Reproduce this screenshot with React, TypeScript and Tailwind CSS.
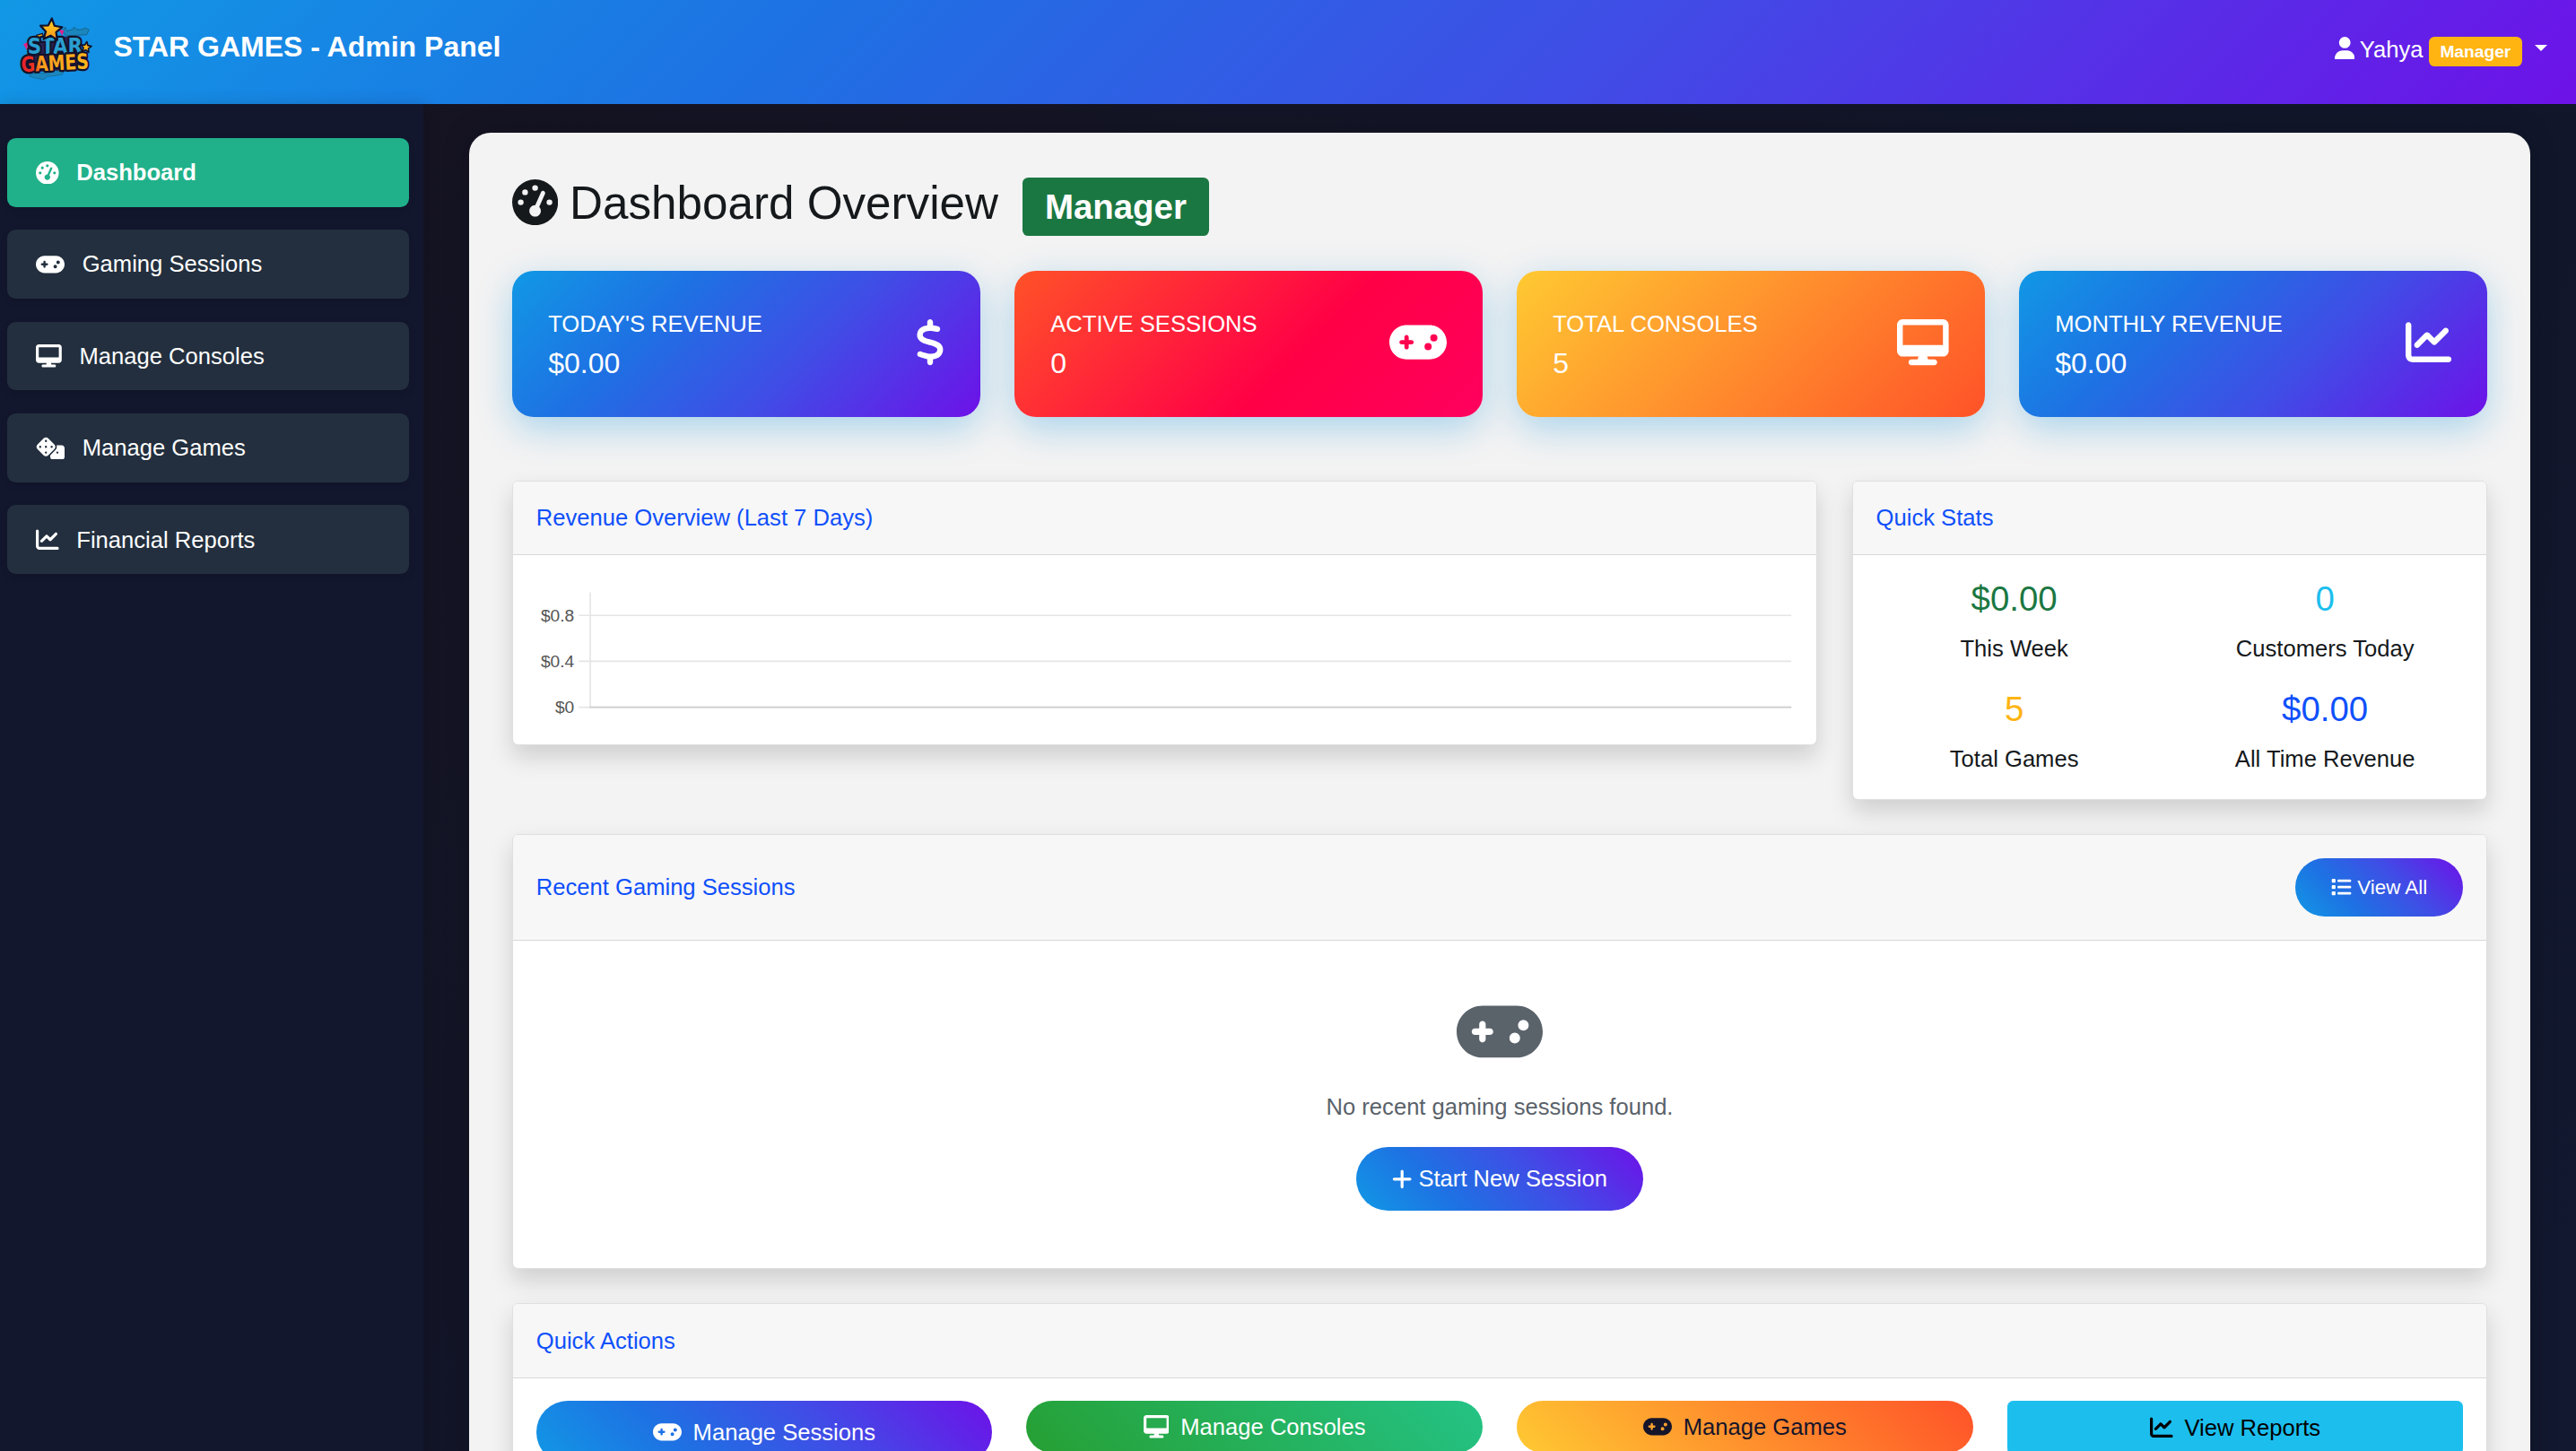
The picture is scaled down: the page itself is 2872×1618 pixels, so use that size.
import type { ReactNode } from "react";
import {
  FaChartLine,
  FaDesktop,
  FaDice,
  FaDollarSign,
  FaGamepad,
  FaGaugeHigh,
  FaList,
  FaPlus,
  FaUser,
} from "react-icons/fa6";

const STAR =
  "M0,-38 L11,-13 L38,-10 L18,9 L24,36 L0,22 L-24,36 L-18,9 L-38,-10 L-11,-13 Z";

function Logo() {
  return (
    <svg viewBox="0 0 330 270" className="mb-[3.75px] h-[56.25px] w-[68.75px] shrink-0">
      <defs>
        <linearGradient id="gold" x1="0" y1="0" x2="0" y2="1">
          <stop offset="0" stopColor="#ffd91f" />
          <stop offset="1" stopColor="#f7921c" />
        </linearGradient>
        <linearGradient id="fire" x1="0" y1="0" x2="1" y2="0">
          <stop offset="0" stopColor="#e8202c" />
          <stop offset="0.17" stopColor="#ee3020" />
          <stop offset="0.3" stopColor="#fb9f1c" />
          <stop offset="1" stopColor="#fdb71d" />
        </linearGradient>
      </defs>
      <path
        d="M184,66 l4,-6 6,14 20,-6 4,-8 6,8 14,2 18,-6 12,6 -8,16 -70,4 -8,-12z"
        fill="#1a86bd"
        stroke="#16648f"
        strokeWidth="3"
      />
      <path
        d="M72,218 l26,-4 30,2 30,-10 26,2 -6,12 -28,4 -22,2 -12,10 -22,-4 -24,-6z"
        fill="#1a86bd"
        stroke="#16648f"
        strokeWidth="2"
      />
      <path d="M48,118 l16,-8 -4,28z M166,68 l18,4 -6,18z" fill="#e0218a" />
      <path
        d="M62,104 L90,94 L130,96 L190,92 L226,92 L238,146 L262,152 L262,190 L240,200 L70,212 L44,196 L48,168 L64,154 Z"
        fill="#2b2150"
      />
      <path d="M92,88 l20,-6 4,14 -20,6z" fill="#f7b21c" stroke="#141430" strokeWidth="4" />
      <g
        fontFamily="DejaVu Sans, sans-serif"
        fontWeight="bold"
        paintOrder="stroke"
        stroke="#12122c"
        strokeLinejoin="round"
      >
        <text
          x="62"
          y="151"
          fontSize="72"
          textLength="184"
          lengthAdjust="spacingAndGlyphs"
          fill="#2a9fd0"
          strokeWidth="14"
        >
          STAR
        </text>
        <text
          x="42"
          y="211"
          fontSize="70"
          textLength="226"
          lengthAdjust="spacingAndGlyphs"
          fill="url(#fire)"
          strokeWidth="14"
          transform="rotate(-3 42 211)"
        >
          GAMES
        </text>
      </g>
      <path
        d={STAR}
        transform="translate(141 68) rotate(4) scale(0.96)"
        fill="url(#gold)"
        stroke="#12122c"
        strokeWidth="7"
        strokeLinejoin="round"
      />
      <path
        d={STAR}
        transform="translate(258 127) rotate(8) scale(0.46)"
        fill="#ffb61c"
        stroke="#12122c"
        strokeWidth="11"
        strokeLinejoin="round"
      />
    </svg>
  );
}

const navItems = [
  { label: "Dashboard", icon: <FaGaugeHigh className="size-4 shrink-0" />, active: true },
  { label: "Gaming Sessions", icon: <FaGamepad className="h-4 w-5 shrink-0" /> },
  { label: "Manage Consoles", icon: <FaDesktop className="h-4 w-[18px] shrink-0" /> },
  { label: "Manage Games", icon: <FaDice className="h-4 w-5 shrink-0" /> },
  { label: "Financial Reports", icon: <FaChartLine className="size-4 shrink-0" /> },
];

const BLUE = "bg-[linear-gradient(135deg,#1198e5,#1e71e3_31%,#3f4ee6_61%,#6d12e8)]";
const BLUE_BUTTON = "bg-[linear-gradient(45deg,#1198e5,#1e71e3_31%,#3f4ee6_61%,#6d12e8)]";

const summary = [
  {
    title: "TODAY'S REVENUE",
    value: "$0.00",
    bg: BLUE,
    icon: <FaDollarSign className="mb-0.5 h-8 w-5" />,
  },
  {
    title: "ACTIVE SESSIONS",
    value: "0",
    bg: "bg-[linear-gradient(135deg,#ff5228,#ff0046_60%,#ff005e)]",
    icon: <FaGamepad className="mb-0.5 h-8 w-10" />,
  },
  {
    title: "TOTAL CONSOLES",
    value: "5",
    bg: "bg-[linear-gradient(135deg,#ffc932,#ff5228)]",
    icon: <FaDesktop className="mb-0.5 h-8 w-9" />,
  },
  {
    title: "MONTHLY REVENUE",
    value: "$0.00",
    bg: BLUE,
    icon: <FaChartLine className="mb-0.5 size-8" />,
  },
];

const quickStats = [
  { value: "$0.00", label: "This Week", color: "text-[#1b7742]" },
  { value: "0", label: "Customers Today", color: "text-[#1cbeee]" },
  { value: "5", label: "Total Games", color: "text-[#ffb412]" },
  { value: "$0.00", label: "All Time Revenue", color: "text-[#0f50fb]" },
];

function Card({
  title,
  action,
  className = "",
  children,
}: {
  title: string;
  action?: ReactNode;
  className?: string;
  children: ReactNode;
}) {
  return (
    <section
      className={`rounded border border-[#dfdfdf] bg-white bg-clip-padding shadow-[0_8px_16px_rgba(0,0,0,0.15)] ${className}`}
    >
      <header className="flex items-center justify-between rounded-t-[3px] border-b border-[#d8d8d8] bg-[#f7f7f7] p-4">
        <h6 className="text-base leading-[19.2px] text-[#0f50fb]">{title}</h6>
        {action}
      </header>
      {children}
    </section>
  );
}

function RevenueChart() {
  const ticks = [
    { label: "$0.8", y: 42 },
    { label: "$0.4", y: 74 },
    { label: "$0", y: 106 },
  ];
  return (
    <svg viewBox="0 0 878 131.5" className="h-[131.5px] w-[878px]">
      {ticks.map((t) => (
        <g key={t.label}>
          <text x="26.4" y={t.y + 4.2} textAnchor="end" fontSize="12" fill="#555">
            {t.label}
          </text>
          <path d={`M29.5 ${t.y}H874.5`} stroke="#e5e5e5" />
        </g>
      ))}
      <path d="M37.5 26V106.5" stroke="#e5e5e5" />
      <path d="M37 106H874.5" stroke="#cfcfcf" />
    </svg>
  );
}

export default function App() {
  return (
    <div className="h-[1011.25px] w-[1795px] overflow-hidden bg-[linear-gradient(135deg,#171320,#11162a_60%,#12182f)] font-['Liberation_Sans',Arial,sans-serif] text-base leading-6 text-[#15191c] [zoom:1.6]">
      <nav className={`flex h-[72.5px] items-center justify-between pr-5 pl-[6.25px] text-white ${BLUE}`}>
        <div className="flex items-center gap-1">
          <Logo />
          <span className="pb-2 text-xl leading-[30px] font-bold">STAR GAMES - Admin Panel</span>
        </div>
        <div className="flex items-center pb-[3.5px]">
          <FaUser className="mr-[3.7px] mb-0.5 h-4 w-3.5" />
          <span>Yahya</span>
          <span className="mt-[2.5px] ml-1 rounded bg-[#ffb412] px-[7.8px] py-[4.2px] text-xs leading-3 font-bold">
            Manager
          </span>
          <span className="mb-0.5 ml-[8.9px] border-x-[4.8px] border-t-[4.8px] border-x-transparent border-t-white" />
        </div>
      </nav>

      <div className="flex h-full">
        <aside className="w-[295px] shrink-0 bg-[#12172e] pt-[23.7px] pr-[10px] pl-[5px] shadow-[2px_0_10px_rgba(0,0,0,0.15)]">
          <ul className="flex flex-col gap-4">
            {navItems.map((item) => (
              <li
                key={item.label}
                className={`flex items-center gap-[12.3px] rounded-md px-5 py-3 text-white shadow-[0_2px_5px_rgba(0,0,0,0.1)] ${
                  item.active ? "bg-[#20b18a] font-bold" : "bg-[#232f3e]"
                }`}
              >
                {item.icon}
                <span>{item.label}</span>
              </li>
            ))}
          </ul>
        </aside>

        <main className="flex-1 px-8 pt-5">
          <div className="h-[1200px] rounded-[15px] bg-[#f3f3f3] p-[30px] shadow-[0_0_20px_rgba(0,0,0,0.2)]">
            <h2 className="mb-6 flex h-[42.2px] items-start text-[32px] leading-[38.4px]">
              <FaGaugeHigh className="mt-[2.2px] mr-[7.9px] size-8 shrink-0" />
              Dashboard Overview
              <span className="mt-[1.3px] ml-[16.9px] rounded bg-[#1b7742] px-[15.6px] py-[8.4px] text-2xl leading-6 font-bold text-white">
                Manager
              </span>
            </h2>

            <div className="grid grid-cols-4 gap-6">
              {summary.map((s) => (
                <div
                  key={s.title}
                  className={`flex items-center justify-between rounded-[15px] p-[25px] text-white shadow-[0_8px_25px_rgba(0,140,220,0.3)] ${s.bg}`}
                >
                  <div>
                    <div className="mb-[3.4px]">{s.title}</div>
                    <div className="mb-[0.6px] text-xl leading-6">{s.value}</div>
                  </div>
                  {s.icon}
                </div>
              ))}
            </div>

            <div className="mt-11 flex items-start justify-between">
              <Card title="Revenue Overview (Last 7 Days)" className="w-[909.3px]">
                <div className="pl-4">
                  <RevenueChart />
                </div>
              </Card>
              <Card title="Quick Stats" className="w-[442.4px]">
                <div className="grid grid-cols-2 gap-y-4 px-1 py-4 text-center">
                  {quickStats.map((q) => (
                    <div key={q.label}>
                      <div className={`mb-2 text-2xl leading-[28.8px] ${q.color}`}>{q.value}</div>
                      <div>{q.label}</div>
                    </div>
                  ))}
                </div>
              </Card>
            </div>

            <Card
              title="Recent Gaming Sessions"
              className="mt-6"
              action={
                <button
                  className={`flex items-center gap-1 rounded-full px-[25px] py-2.5 text-sm leading-[21px] text-white ${BLUE_BUTTON}`}
                >
                  <FaList className="size-3.5" />
                  View All
                </button>
              }
            >
              <div className="flex flex-col items-center py-10 text-[#5a626a]">
                <FaGamepad className="mt-[-0.6px] mb-[16.6px] h-12 w-[60px]" />
                <p className="mb-4">No recent gaming sessions found.</p>
                <button
                  className={`flex items-center gap-[4.4px] rounded-full px-[25px] py-2.5 text-white ${BLUE_BUTTON}`}
                >
                  <FaPlus className="h-4 w-3.5" />
                  Start New Session
                </button>
              </div>
            </Card>

            <Card title="Quick Actions" className="mt-6">
              <div className="grid grid-cols-4 items-start gap-6 px-4 pt-[15.6px] pb-4">
                <button
                  className={`flex items-center justify-center gap-2 rounded-full py-2.5 text-white ${BLUE_BUTTON}`}
                >
                  <FaGamepad className="h-4 w-5" />
                  Manage Sessions
                </button>
                <button className="flex items-center justify-center gap-2 rounded-full bg-[linear-gradient(45deg,#269f33,#24c386)] py-1.5 text-white">
                  <FaDesktop className="h-4 w-[18px]" />
                  Manage Consoles
                </button>
                <button className="flex items-center justify-center gap-2 rounded-full bg-[linear-gradient(45deg,#ffc932,#ff5228)] py-1.5 text-[#15152a]">
                  <FaGamepad className="h-4 w-5" />
                  Manage Games
                </button>
                <button className="flex items-center justify-center gap-2 rounded border border-[#1cbeee] bg-[#1cbeee] py-1.5 text-black">
                  <FaChartLine className="size-4" />
                  View Reports
                </button>
              </div>
            </Card>
          </div>
        </main>
      </div>
    </div>
  );
}
